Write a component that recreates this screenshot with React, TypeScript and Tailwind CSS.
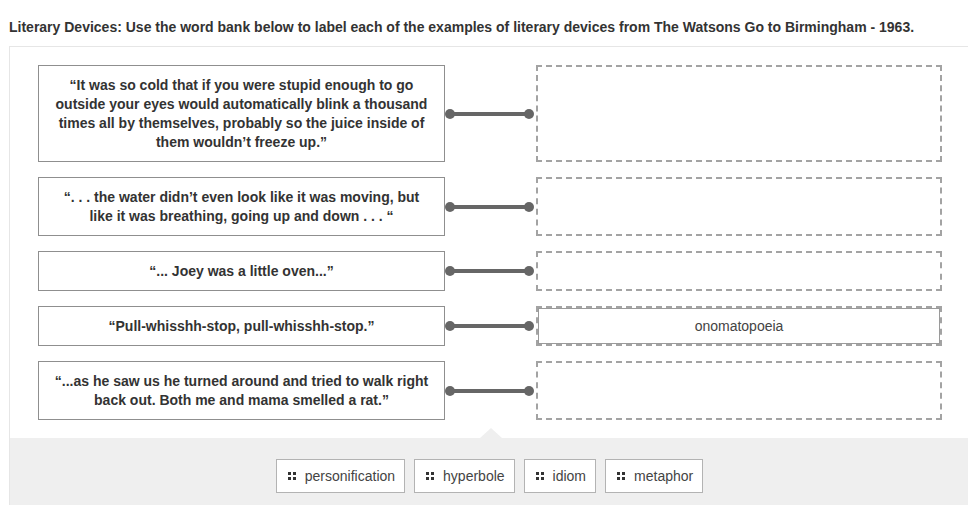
import React from "react";

const rows: { text: string[]; answer?: string }[] = [
  {
    text: [
      "“It was so cold that if you were stupid enough to go outside your eyes would automatically blink a thousand times all by themselves, probably so the juice inside of them wouldn’t freeze up.”",
    ],
  },
  { text: ["“. . . the water didn’t even look like it was moving, but like it was breathing, going up and down . . . “"] },
  { text: ["“... Joey was a little oven...”"] },
  { text: ["“Pull-whisshh-stop, pull-whisshh-stop.”"], answer: "onomatopoeia" },
  { text: ["“...as he saw us he turned around and tried to walk right back out. Both me and mama smelled a rat.”"] },
];

const bank = ["personification", "hyperbole", "idiom", "metaphor"];

function Grip() {
  return (
    <span className="grid grid-cols-2 gap-[2px] mr-[9px]">
      <span className="w-[3px] h-[3px] bg-[#333]" />
      <span className="w-[3px] h-[3px] bg-[#333]" />
      <span className="w-[3px] h-[3px] bg-[#333]" />
      <span className="w-[3px] h-[3px] bg-[#333]" />
    </span>
  );
}

export default function App() {
  return (
    <div className="w-[968px] h-[505px] overflow-hidden bg-white text-[#333]" style={{ fontFamily: "'Liberation Sans', Arial, sans-serif" }}>
      <div className="pl-[9px] pt-[18px] h-[46px] text-[14px] font-bold leading-[19px] whitespace-nowrap">
        Literary Devices: Use the word bank below to label each of the examples of literary devices from The Watsons Go to Birmingham - 1963.
      </div>
      <div className="ml-[9px] w-[975px] border-l border-t border-[#e6e6e6]">
        <div className="pl-[28px] pt-[18px] pb-[18px] flex flex-col gap-[15px]">
          {rows.map((r, i) => (
            <div key={i} className="flex items-stretch">
              <div className="w-[407px] border border-[#8f8f8f] px-[12px] py-[9.5px] text-center text-[14px] font-bold leading-[19px]">
                {r.text[0]}
              </div>
              <div className="w-[91px] flex items-center pr-[2px]">
                <span className="w-[10px] h-[10px] rounded-full bg-[#666] -mr-[2px]" />
                <span className="flex-1 h-[4px] bg-[#666]" />
                <span className="w-[10px] h-[10px] rounded-full bg-[#666] -ml-[2px]" />
              </div>
              <div className="w-[406px] border-2 border-dashed border-[#a3a3a3] p-0 flex">
                {r.answer && (
                  <div className="flex-1 border border-[#9a9a9a] bg-white flex items-center justify-center text-[14px] text-[#444]">
                    {r.answer}
                  </div>
                )}
              </div>
            </div>
          ))}
        </div>
        <div className="relative bg-[#efefef] h-[80px] pt-[21px] flex justify-center gap-[9px] w-[959px]">
          <span className="absolute left-[470px] -top-[10px] w-0 h-0 border-l-[11px] border-r-[11px] border-b-[10px] border-l-transparent border-r-transparent border-b-[#efefef]" />
          {bank.map((b) => (
            <div key={b} className="h-[34px] flex items-center pl-[11px] pr-[9px] bg-white border border-[#b3b3b3] text-[14px] text-[#444]">
              <Grip />
              {b}
            </div>
          ))}
        </div>
      </div>
    </div>
  );
}
